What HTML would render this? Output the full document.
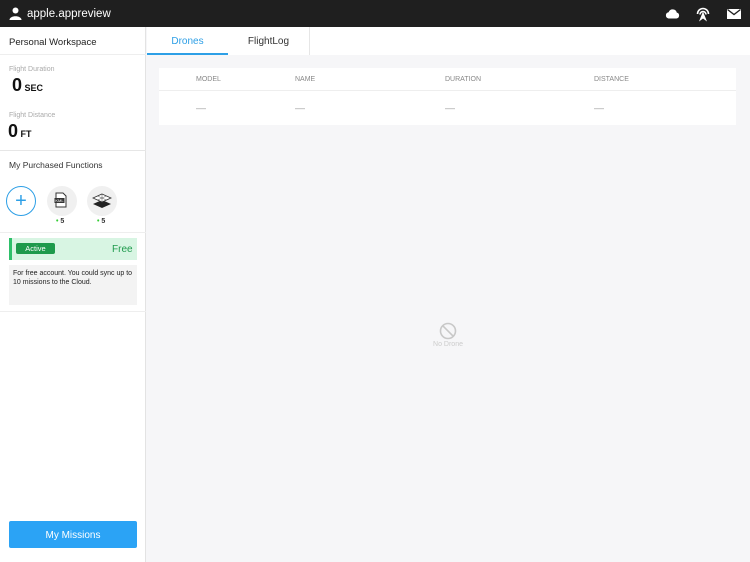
<!DOCTYPE html><html><head><style>
*{margin:0;padding:0;box-sizing:border-box}
body{width:750px;height:562px;overflow:hidden;font-family:"Liberation Sans",sans-serif;background:#f6f6f8;position:relative}
.a{position:absolute}
</style></head><body>
<div class="a" style="left:0;top:0;width:750px;height:27px;background:#1f1f1f"></div>
<svg class="a" style="left:9px;top:7px" width="13" height="13" viewBox="0 0 13 13"><circle cx="6.5" cy="3.5" r="3" fill="#fff"/><path d="M0.5 13 C0.5 8 12.5 8 12.5 13Z" fill="#fff"/></svg>
<div class="a" style="left:27px;top:8px;color:#fff;font-size:11.5px">apple.appreview</div>
<svg class="a" style="left:665px;top:8px" width="15" height="11" viewBox="0 0 15 11"><path d="M3.5 10.5 H11.5 A3 3 0 0 0 11.8 4.6 A4.3 4.3 0 0 0 3.6 4.2 A3.2 3.2 0 0 0 3.5 10.5Z" fill="#fff"/></svg>
<svg class="a" style="left:695px;top:6px" width="16" height="16" viewBox="0 0 16 16" fill="none" stroke="#fff" stroke-width="1.6"><path d="M2.5 8 A5.5 5.5 0 0 1 13.5 8"/><path d="M5 8.5 A3 3 0 0 1 11 8.5"/><path d="M8 5.5 L12 15.5 L8 12.5 L4 15.5Z" fill="#fff" stroke="none"/></svg>
<svg class="a" style="left:727px;top:9px" width="14" height="10" viewBox="0 0 14 10"><rect width="14" height="10" fill="#fff"/><path d="M0.5 0.5 L7 5.5 L13.5 0.5" fill="none" stroke="#1f1f1f" stroke-width="1.3"/></svg>

<div class="a" style="left:0;top:27px;width:146px;height:535px;background:#fff;border-right:1px solid #e3e3e3"></div>
<div class="a" style="left:9px;top:37px;font-size:9.5px;color:#222">Personal Workspace</div>
<div class="a" style="left:0;top:54px;width:146px;height:1px;background:#eee"></div>
<div class="a" style="left:9px;top:66px;font-size:7px;color:#aaa">Flight Duration</div>
<div class="a" style="left:12px;top:75px;font-size:18px;color:#111;font-weight:bold">0<span style="font-size:9px;font-weight:bold"> SEC</span></div>
<div class="a" style="left:9px;top:112px;font-size:7px;color:#aaa">Flight Distance</div>
<div class="a" style="left:8px;top:121px;font-size:18px;color:#111;font-weight:bold">0<span style="font-size:9px;font-weight:bold"> FT</span></div>
<div class="a" style="left:0;top:150px;width:146px;height:1px;background:#e6e6e6"></div>
<div class="a" style="left:9px;top:160px;font-size:8.5px;color:#333">My Purchased Functions</div>
<div class="a" style="left:6px;top:186px;width:30px;height:30px;border:1.2px solid #2d9fe6;border-radius:50%;color:#2d9fe6;font-size:20px;line-height:28px;text-align:center">+</div>
<div class="a" style="left:47px;top:186px;width:30px;height:30px;border-radius:50%;background:#f0f0f0"></div>
<svg class="a" style="left:53px;top:192px" width="16" height="16" viewBox="0 0 16 16"><path d="M3 1 H10 L13 4 V15 H3Z" fill="#fff" stroke="#333"/><rect x="1.5" y="6" width="10" height="5" fill="#333"/><text x="6.5" y="10" font-size="4" fill="#fff" text-anchor="middle" font-family="Liberation Sans">KML</text></svg>
<div class="a" style="left:87px;top:186px;width:30px;height:30px;border-radius:50%;background:#f0f0f0"></div>
<svg class="a" style="left:92px;top:193px" width="20" height="16" viewBox="0 0 20 16"><path d="M10 7 L19 11 L10 15 L1 11Z" fill="#222"/><path d="M10 1 L19 5 L10 9 L1 5Z" fill="#fff" stroke="#333" stroke-width=".8"/><path d="M5.5 3 L14.5 7 M14.5 3 L5.5 7 M10 1 L10 9" stroke="#555" stroke-width=".5"/></svg>
<div class="a" style="left:56px;top:218px;font-size:7px;color:#333;font-weight:bold"><span style="color:#3c3">• </span>5</div>
<div class="a" style="left:97px;top:218px;font-size:7px;color:#333;font-weight:bold"><span style="color:#3c3">• </span>5</div>
<div class="a" style="left:0;top:232px;width:146px;height:1px;background:#eee"></div>
<div class="a" style="left:9px;top:238px;width:128px;height:22px;background:#d8f5e3;border-left:3px solid #2ec06a"></div>
<div class="a" style="left:16px;top:243px;width:39px;height:11px;background:#1e9a4c;border-radius:2px;color:#fff;font-size:7.5px;text-align:center;line-height:12px">Active</div>
<div class="a" style="left:112px;top:244px;font-size:10px;color:#1e9a4c">Free</div>
<div class="a" style="left:9px;top:265px;width:128px;height:40px;background:#f3f3f3;padding:5px 4px;font-size:7px;color:#222;line-height:8.5px">For free account. You could sync up to 10 missions to the Cloud.</div>
<div class="a" style="left:0;top:311px;width:146px;height:1px;background:#eee"></div>
<div class="a" style="left:9px;top:521px;width:128px;height:27px;background:#2ba3f5;border-radius:2px;color:#fff;font-size:10px;text-align:center;line-height:29px">My Missions</div>

<div class="a" style="left:147px;top:27px;width:603px;height:28px;background:#fff"></div>
<div class="a" style="left:147px;top:27px;width:81px;height:28px;border-bottom:2px solid #2d9fe6;color:#2d9fe6;font-size:10px;text-align:center;line-height:30px">Drones</div>
<div class="a" style="left:228px;top:27px;width:82px;height:28px;border-right:1px solid #e6e6e6;color:#333;font-size:10px;text-align:center;line-height:30px">FlightLog</div>

<div class="a" style="left:159px;top:68px;width:577px;height:57px;background:#fff"></div>
<div class="a" style="left:159px;top:90px;width:577px;height:1px;background:#eee"></div>
<div class="a" style="left:196px;top:76px;font-size:7px;color:#888">MODEL</div>
<div class="a" style="left:295px;top:76px;font-size:7px;color:#888">NAME</div>
<div class="a" style="left:445px;top:76px;font-size:7px;color:#888">DURATION</div>
<div class="a" style="left:594px;top:76px;font-size:7px;color:#888">DISTANCE</div>
<div class="a" style="left:196px;top:103px;font-size:9px;color:#999">––</div>
<div class="a" style="left:295px;top:103px;font-size:9px;color:#999">––</div>
<div class="a" style="left:445px;top:103px;font-size:9px;color:#999">––</div>
<div class="a" style="left:594px;top:103px;font-size:9px;color:#999">––</div>

<svg class="a" style="left:439px;top:322px" width="18" height="18" viewBox="0 0 18 18" fill="none" stroke="#c8c8c8" stroke-width="1.6"><circle cx="9" cy="9" r="7.5"/><path d="M3.7 3.7 L14.3 14.3"/></svg>
<div class="a" style="left:418px;top:341px;width:60px;text-align:center;font-size:7px;color:#ccc">No Drone</div>
</body></html>
